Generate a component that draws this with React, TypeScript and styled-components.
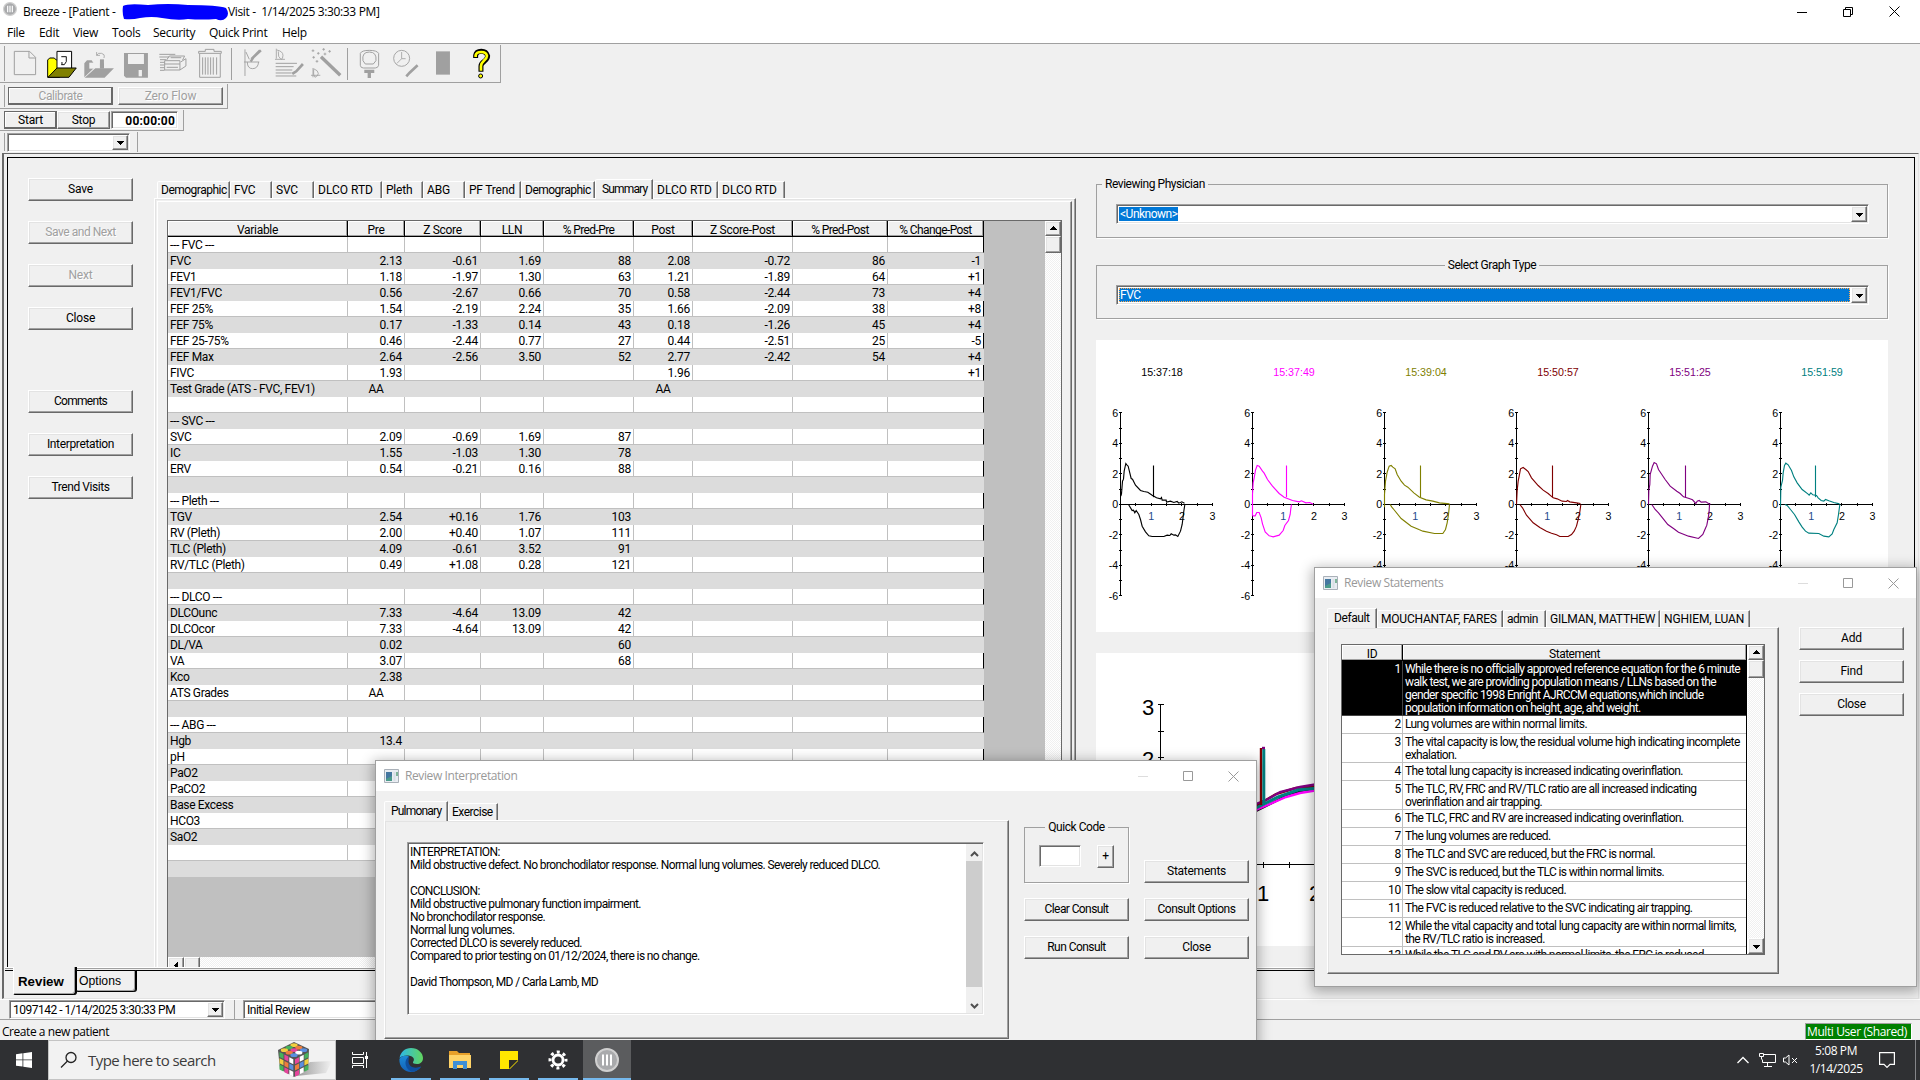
import React from 'react';
import styled, { createGlobalStyle, css } from 'styled-components';

const face = '#f0f0f0';
const sys = `'Roboto', 'Liberation Sans', sans-serif`;
const segoe = `'Open Sans', 'Noto Sans', sans-serif`;

const GlobalStyle = createGlobalStyle`
  * { box-sizing: border-box; }
  html, body { margin: 0; padding: 0; }
  body { width: 1920px; height: 1080px; overflow: hidden; background: ${face}; }
`;

const raised = css`
  border: 1px solid;
  border-color: #fff #696969 #696969 #fff;
  box-shadow: inset -1px -1px 0 #a0a0a0, inset 1px 1px 0 #e3e3e3;
`;
const sunken = css`
  border: 1px solid;
  border-color: #a0a0a0 #fff #fff #a0a0a0;
  box-shadow: inset 1px 1px 0 #696969, inset -1px -1px 0 #e3e3e3;
`;

const Screen = styled.div`
  position: relative;
  width: 1920px;
  height: 1080px;
  display: flex;
  flex-direction: column;
  overflow: hidden;
  background: ${face};
  color: #000;
  font: 12px/13px ${sys};
  letter-spacing: -0.2px;
  white-space: pre;
`;

/* ---------- title and menu ---------- */
const TitleBar = styled.header`
  height: 23px;
  flex: none;
  display: flex;
  align-items: center;
  background: #fff;
  padding: 0 20px 0 3px;
  font: 12px/20px ${segoe};
  letter-spacing: -0.35px;
`;
const TitleText = styled.span<{ $w: number }>`
  width: ${p => p.$w}px;
`;
const WindowControls = styled.div<{ $gap: number }>`
  margin-left: auto;
  display: flex;
  align-items: center;
  gap: ${p => p.$gap}px;
`;
const MenuBar = styled.nav`
  height: 20px;
  flex: none;
  display: flex;
  align-items: center;
  background: #fff;
  padding-left: 7px;
  font: 12px/18px ${segoe};
  letter-spacing: -0.3px;
`;
const MenuItem = styled.span<{ $w: number }>`
  width: ${p => p.$w}px;
`;

/* ---------- toolbars ---------- */
const Toolbars = styled.div`
  flex: none;
  height: 110px;
  border-top: 1px solid #a0a0a0;
  padding-top: 1px;
  display: flex;
  flex-direction: column;
  align-items: flex-start;
`;
const Band = styled.div<{ $w: number; $h: number; $pad: number; $last?: boolean }>`
  width: ${p => p.$w}px;
  height: ${p => p.$h}px;
  padding-left: ${p => p.$pad}px;
  border-right: 1px solid #a0a0a0;
  border-bottom: ${p => (p.$last ? 'none' : '1px solid #a0a0a0')};
  margin-bottom: 1px;
  display: flex;
  align-items: center;
  background: linear-gradient(#a0a0a0, #a0a0a0) 4px 1px / 1px calc(100% - 2px) no-repeat;
`;
const BandSep = styled.span<{ $w: number }>`
  width: ${p => p.$w}px;
  height: 32px;
  background: linear-gradient(#a0a0a0, #a0a0a0) 2px 0 / 1px 100% no-repeat;
`;
const Button = styled.button<{ $w?: number; $h?: number; $ls?: number; $default?: boolean }>`
  ${raised}
  width: ${p => p.$w ?? 105}px;
  height: ${p => p.$h ?? 23}px;
  flex: none;
  padding: ${p => (p.$h === 18 ? '1px 0 0' : '0 0 1px')};
  background: ${face};
  color: #000;
  font: 12px/13px ${sys};
  letter-spacing: ${p => p.$ls ?? -0.2}px;
  text-align: center;
  ${p => p.$default && css`border-color: #696969; box-shadow: inset -1px -1px 0 #696969, inset 1px 1px 0 #fff;`}
  &:disabled { color: #a0a0a0; text-shadow: 1px 1px 0 #fff; }
`;
const Timer = styled.div`
  ${sunken}
  width: 67px;
  height: 18px;
  margin-left: 1px;
  background: #fff;
  padding: 3px 2px 0 0;
  text-align: right;
  font: bold 12px/13px ${sys};
  letter-spacing: 0.2px;
`;
const Combo = styled.div<{ $w: number; $h?: number }>`
  ${sunken}
  width: ${p => p.$w}px;
  height: ${p => p.$h ?? 19}px;
  background: #fff;
  padding: 1px;
  display: flex;
  align-items: stretch;
  flex: none;
`;
const ComboText = styled.span<{ $state?: 'selected' | 'focused' }>`
  flex: ${p => (p.$state === 'selected' ? 'none' : '1')};
  margin: 1px ${p => (p.$state === 'selected' ? 'auto' : '1px')} 1px 1px;
  padding: 1px 1px 0;
  line-height: 12px;
  letter-spacing: -0.5px;
  ${p => p.$state && css`background: #0078d7; color: #fff;`}
  ${p => p.$state === 'focused' && css`outline: 1px dotted #ffab50; outline-offset: -1px;`}
`;
const ArrowBox = styled.span<{ $h?: number }>`
  ${raised}
  width: 16px;
  height: ${p => (p.$h ? p.$h + 'px' : 'auto')};
  flex: none;
  background: ${face};
  display: flex;
  align-items: center;
  justify-content: center;
`;
const Arrow = ({ dir = 'down' }: { dir?: 'up' | 'down' | 'left' }) => (
  <svg width="7" height="7" viewBox="0 0 7 7" shapeRendering="crispEdges">
    <path d={{ down: 'M0 2h7L3.5 6z', up: 'M0 5h7L3.5 1z', left: 'M5 0v7L1 3.5z' }[dir]} />
  </svg>
);

/* ---------- workspace ---------- */
const Workspace = styled.main`
  flex: none;
  height: 846px;
  margin-left: 2px;
  width: 1917px;
  border-left: 2px solid #696969;
  border-top: 1px solid #696969;
  border-right: 1px solid #e3e3e3;
  border-bottom: 1px solid #e3e3e3;
  display: flex;
  flex-direction: column;
  padding: 3px 4px 0 3px;
`;
const Form = styled.div`
  height: 810px;
  width: 1908px;
  flex: none;
  border-left: 1px solid #000;
  border-top: 1px solid #000;
  border-right: 1px solid #000;
  display: flex;
  overflow: hidden;
`;
const Sidebar = styled.aside`
  width: 146px;
  flex: none;
  padding: 20px 0 0 20px;
  display: flex;
  flex-direction: column;
  gap: 20px;
`;
const SidebarGap = styled.div`
  height: 20px;
`;
const TabArea = styled.section`
  width: 922px;
  flex: none;
  padding-top: 21px;
`;
const TabRow = styled.div<{ $pad?: number }>`
  height: 19px;
  display: flex;
  align-items: flex-end;
  padding-left: ${p => p.$pad ?? 0}px;
`;
const Tab = styled.span<{ $w: number; $active?: boolean; $ls?: number }>`
  width: ${p => p.$w}px;
  height: ${p => (p.$active ? 20 : 17)}px;
  flex: none;
  padding: ${p => (p.$active ? '3px 0 0 6px' : '2px 0 0 3px')};
  margin-bottom: ${p => (p.$active ? -1 : 0)}px;
  background: ${face};
  border: solid;
  border-width: 1px 1px 0 1px;
  border-color: #fff #696969 transparent #fff;
  box-shadow: inset -1px 0 0 #a0a0a0;
  border-top-left-radius: 2px;
  letter-spacing: ${p => p.$ls ?? -0.2}px;
  z-index: ${p => (p.$active ? 1 : 0)};
`;
const OuterPane = styled.div`
  height: 790px;
  border: 1px solid;
  border-color: #fff #696969 #696969 #fff;
  box-shadow: inset -1px 0 0 #a0a0a0, inset 1px 1px 0 #e3e3e3;
  padding: 2px 3px 0 2px;
`;
const InnerPane = styled.div`
  height: 790px;
  border: 1px solid;
  border-color: #fff #696969 #696969 #fff;
  box-shadow: inset -1px 0 0 #a0a0a0;
  padding: 18px 0 0 9px;
`;
const GridBox = styled.div`
  width: 895px;
  height: 760px;
  border: 1px solid #696969;
  display: flex;
  background: #c0c0c0;
`;
const GridMain = styled.div`
  flex: 1;
  display: flex;
  flex-direction: column;
`;
const cols = '180px 57px 76px 63px 90px 59px 100px 95px 96px';
const HeadRow = styled.div<{ $cols: string }>`
  display: grid;
  grid-template-columns: ${p => p.$cols};
  height: 16px;
  width: max-content;
  border-bottom: 1px solid #000;
  flex: none;
`;
const HeadCell = styled.span<{ $ls?: number }>`
  background: ${face};
  border-right: 1px solid #000;
  box-shadow: inset -1px -1px 0 #a0a0a0, inset 1px 1px 0 #fff;
  text-align: center;
  padding-top: 3px;
  overflow: hidden;
  letter-spacing: ${p => p.$ls ?? -0.3}px;
`;
const DataRow = styled.div<{ $alt: boolean }>`
  display: grid;
  grid-template-columns: ${cols};
  width: max-content;
  height: 16px;
  flex: none;
  background: ${p => (p.$alt ? '#dcdcdc' : '#fff')};
  --line: ${p => (p.$alt ? '#dcdcdc' : '#c0c0c0')};
  --end: ${p => (p.$alt ? '#dcdcdc' : '#000')};
`;
const Cell = styled.span<{ $align: string }>`
  border-right: 1px solid var(--line);
  border-bottom: 1px solid var(--line);
  text-align: ${p => p.$align};
  padding: 2px 2px 0;
  letter-spacing: ${p => (p.$align === 'left' ? -0.35 : -0.25)}px;
  &:last-child { border-right-color: var(--end); }
`;
const hatch = css`
  background: repeating-conic-gradient(#fff 0 25%, ${face} 0 50%) 0 0 / 2px 2px;
`;
const VScroll = styled.div`
  ${hatch}
  width: 16px;
  flex: none;
  display: flex;
  flex-direction: column;
`;
const ScrollThumb = styled.span<{ $w?: number; $h: number }>`
  ${raised}
  background: ${face};
  width: ${p => p.$w ?? 16}px;
  height: ${p => p.$h}px;
`;
const Push = styled.span`
  margin-top: auto;
`;
const HScroll = styled.div`
  ${hatch}
  margin-top: auto;
  height: 22px;
  display: flex;
`;

/* ---------- right side ---------- */
const RightSide = styled.section`
  width: 837px;
  padding: 19px 0 0 20px;
  display: flex;
  flex-direction: column;
`;
const Group = styled.fieldset<{ $w: number; $h: number; $mb?: number; $pt?: number; $legend: string }>`
  width: ${p => p.$w}px;
  height: ${p => p.$h}px;
  margin: 0 0 ${p => p.$mb ?? 0}px;
  min-width: 0;
  border: 1px solid #a0a0a0;
  box-shadow: 1px 1px 0 #fff;
  padding: ${p => p.$pt ?? 12}px 19px 0;
  & > legend {
    padding: 1px 3px 0;
    margin: 0 ${p => (p.$legend === 'center' ? 'auto' : '0 0 -14px')};
    height: 15px;
    letter-spacing: -0.45px;
  }
`;
const Legend = styled.legend``;
const ChartPanel = styled.div<{ $h: number; $mb?: number }>`
  width: 792px;
  height: ${p => p.$h}px;
  margin-bottom: ${p => p.$mb ?? 0}px;
  background: #fff;
  display: flex;
  flex: none;
`;

/* ---------- bottom of the workspace ---------- */
const SheetTabs = styled.div`
  height: 32px;
  margin-left: -2px;
  width: 1911px;
  flex: none;
  display: flex;
  align-items: flex-start;
  padding-left: 8px;
  background: linear-gradient(#fff, #fff) 0 0 / 100% 1px no-repeat, linear-gradient(#a0a0a0, #a0a0a0) 0 1px / 100% 1px no-repeat, linear-gradient(#000, #000) 0 3px / 100% 1px no-repeat;
`;
const SheetTab = styled.span<{ $active?: boolean; $w: number }>`
  width: ${p => p.$w}px;
  height: ${p => (p.$active ? 28 : 22)}px;
  margin-top: ${p => (p.$active ? 0 : 3)}px;
  background: ${face};
  border-right: 1px solid #000;
  border-bottom: 1px solid #000;
  border-left: 1px solid ${p => (p.$active ? '#fff' : '#000')};
  border-top: ${p => (p.$active ? 'none' : '1px solid #000')};
  box-shadow: inset -1px -1px 0 #a0a0a0, 1px 0 0 #000;
  border-radius: 0 0 3px 2px;
  padding: ${p => (p.$active ? '7px 0 0 4px' : '3px 0 0 2px')};
  font: ${p => (p.$active ? 'bold 13.3px' : '12.2px')}/15px 'Liberation Sans', Arial, sans-serif;
  letter-spacing: 0;
`;
const ComboStrip = styled.div`
  height: 21px;
  flex: none;
  border-top: 1px solid #fff;
  border-bottom: 1px solid #a0a0a0;
  display: flex;
  align-items: center;
  padding-left: 9px;
`;
const StripSep = styled.span`
  width: 1px;
  height: 19px;
  margin: 0 8px 0 9px;
  background: #a0a0a0;
`;
const StatusBar = styled.footer`
  height: 20px;
  flex: none;
  display: flex;
  align-items: flex-end;
  justify-content: space-between;
  padding: 0 8px 0 2px;
  font: 12px/16px ${segoe};
  letter-spacing: -0.45px;
`;
const UserBadge = styled.span`
  width: 107px;
  height: 17px;
  border: 1px solid #a0a0a0;
  border-right-color: #fff;
  border-bottom-color: #fff;
  background: #008000;
  color: #fff;
  padding-left: 1px;
  letter-spacing: -0.4px;
  line-height: 16px;
`;

/* ---------- taskbar ---------- */
const Taskbar = styled.div`
  position: relative;
  z-index: 5;
  height: 40px;
  flex: none;
  background: #2f3033;
  display: flex;
  align-items: stretch;
  color: #fff;
  letter-spacing: 0;
`;
const TaskCell = styled.span<{ $w: number; $ml?: number; $running?: boolean; $active?: boolean }>`
  width: ${p => p.$w}px;
  margin-left: ${p => p.$ml ?? 0}px;
  display: flex;
  align-items: center;
  justify-content: center;
  background: ${p => (p.$active ? '#5b5c5e' : 'transparent')};
  box-shadow: ${p => (p.$running ? 'inset 0 -2px 0 #76b9ed' : 'none')};
`;
const SearchBox = styled.span`
  width: 288px;
  background: #f2f2f2;
  border: 1px solid #c4c4c4;
  display: flex;
  align-items: center;
  padding: 0 1px 0 11px;
  color: #3c3c3c;
  font: 15px/20px ${segoe};
  letter-spacing: -0.55px;
`;
const SearchText = styled.span`
  margin: 0 auto 0 10px;
`;
const Tray = styled.span`
  margin-left: auto;
  display: flex;
  align-items: center;
`;
const Clock = styled.span`
  width: 74px;
  text-align: center;
  font: 12px/18px ${segoe};
  letter-spacing: -0.4px;
  margin-right: 6px;
`;
const PeekEdge = styled.span`
  width: 5px;
  height: 40px;
  margin-left: 20px;
  border-left: 1px solid #85868a;
`;

/* ---------- floating windows ---------- */
const Dialog = styled.div<{ $x: number; $y: number; $w: number; $h: number }>`
  position: absolute;
  left: ${p => p.$x}px;
  top: ${p => p.$y}px;
  width: ${p => p.$w}px;
  height: ${p => p.$h}px;
  border: 1px solid #a0a0a0;
  background: ${face};
  box-shadow: 0 3px 12px 2px rgba(0, 0, 0, 0.3);
  display: flex;
  flex-direction: column;
`;
const DialogTitle = styled.div`
  height: 30px;
  flex: none;
  background: #fff;
  display: flex;
  align-items: center;
  padding: 0 17px 0 8px;
  color: #999;
  font: 12px/16px ${segoe};
  letter-spacing: -0.4px;
`;
const DialogName = styled.span`
  margin-left: 6px;
`;
const DialogBody = styled.div<{ $pad: string }>`
  flex: 1;
  display: flex;
  padding: ${p => p.$pad};
`;
const DialogPane = styled.div<{ $w: number; $h: number; $pad: string }>`
  ${raised}
  width: ${p => p.$w}px;
  height: ${p => p.$h}px;
  padding: ${p => p.$pad};
`;
const Column = styled.div<{ $gap: number; $ml: number; $mt: number }>`
  display: flex;
  flex-direction: column;
  gap: ${p => p.$gap}px;
  margin: ${p => p.$mt}px 0 0 ${p => p.$ml}px;
`;
const TextBox = styled.div`
  ${sunken}
  width: 577px;
  height: 173px;
  background: #fff;
  padding: 1px;
  display: flex;
`;
const TextContent = styled.div`
  flex: 1;
  padding: 2px 0 0 1px;
  letter-spacing: -0.61px;
`;
const FlatScroll = styled.div`
  width: 16px;
  background: ${face};
  display: flex;
  flex-direction: column;
  align-items: center;
  padding-top: 7px;
`;
const FlatThumb = styled.span`
  width: 16px;
  height: 126px;
  margin: 4px 0 16px;
  background: #cdcdcd;
`;
const QuickRow = styled.div`
  display: flex;
  justify-content: space-between;
  margin: 0 -5px 0 -5px;
`;
const CodeInput = styled.span`
  ${sunken}
  width: 42px;
  height: 22px;
  background: #fff;
`;
const StatementBox = styled.div`
  width: 424px;
  height: 311px;
  border: 1px solid #696969;
  display: flex;
  background: #fff;
`;
const StatementList = styled.div`
  width: 405px;
  margin-right: 1px;
  display: flex;
  flex-direction: column;
  overflow: hidden;
  border-right: 1px solid #000;
`;
const StatementRow = styled.div<{ $h: number; $sel?: boolean }>`
  display: grid;
  grid-template-columns: 61px 344px;
  height: ${p => p.$h}px;
  flex: none;
  background: ${p => (p.$sel ? '#000' : '#fff')};
  color: ${p => (p.$sel ? '#fff' : '#000')};
  border-bottom: 1px solid ${p => (p.$sel ? '#444' : '#c0c0c0')};
`;
const StatementId = styled.span`
  text-align: right;
  padding: 2px 1px 0 0;
  border-right: 1px solid #c0c0c0;
  ${StatementRow}:nth-child(2) & { border-right-color: #444; }
`;
const StatementText = styled.span`
  padding: 2px 0 0 2px;
  letter-spacing: -0.61px;
`;

/* ---------- data ---------- */
const rows: string[][] = [
  ['--- FVC ---'],
  ['FVC', '2.13', '-0.61', '1.69', '88', '2.08', '-0.72', '86', '-1'],
  ['FEV1', '1.18', '-1.97', '1.30', '63', '1.21', '-1.89', '64', '+1'],
  ['FEV1/FVC', '0.56', '-2.67', '0.66', '70', '0.58', '-2.44', '73', '+4'],
  ['FEF 25%', '1.54', '-2.19', '2.24', '35', '1.66', '-2.09', '38', '+8'],
  ['FEF 75%', '0.17', '-1.33', '0.14', '43', '0.18', '-1.26', '45', '+4'],
  ['FEF 25-75%', '0.46', '-2.44', '0.77', '27', '0.44', '-2.51', '25', '-5'],
  ['FEF Max', '2.64', '-2.56', '3.50', '52', '2.77', '-2.42', '54', '+4'],
  ['FIVC', '1.93', '', '', '', '1.96', '', '', '+1'],
  ['Test Grade (ATS - FVC, FEV1)', 'AA', '', '', '', 'AA'],
  [],
  ['--- SVC ---'],
  ['SVC', '2.09', '-0.69', '1.69', '87'],
  ['IC', '1.55', '-1.03', '1.30', '78'],
  ['ERV', '0.54', '-0.21', '0.16', '88'],
  [],
  ['--- Pleth ---'],
  ['TGV', '2.54', '+0.16', '1.76', '103'],
  ['RV (Pleth)', '2.00', '+0.40', '1.07', '111'],
  ['TLC (Pleth)', '4.09', '-0.61', '3.52', '91'],
  ['RV/TLC (Pleth)', '0.49', '+1.08', '0.28', '121'],
  [],
  ['--- DLCO ---'],
  ['DLCOunc', '7.33', '-4.64', '13.09', '42'],
  ['DLCOcor', '7.33', '-4.64', '13.09', '42'],
  ['DL/VA', '0.02', '', '', '60'],
  ['VA', '3.07', '', '', '68'],
  ['Kco', '2.38'],
  ['ATS Grades', 'AA'],
  [],
  ['--- ABG ---'],
  ['Hgb', '13.4'],
  ['pH'],
  ['PaO2'],
  ['PaCO2'],
  ['Base Excess'],
  ['HCO3'],
  ['SaO2'],
  [],
  [],
];
const heads = ['Variable', 'Pre', 'Z Score', 'LLN', '% Pred-Pre', 'Post', 'Z Score-Post', '% Pred-Post', '% Change-Post'];

const statements: [string, number][] = [
  ['While there is no officially approved reference equation for the 6 minute\nwalk test, we are providing population means / LLNs based on the\ngender specific 1998 Enright AJRCCM equations,which include\npopulation information on height, age, ahd weight.', 55],
  ['Lung volumes are within normal limits.', 18],
  ['The vital capacity is low, the residual volume high indicating incomplete\nexhalation.', 29],
  ['The total lung capacity is increased indicating overinflation.', 18],
  ['The TLC, RV, FRC and RV/TLC ratio are all increased indicating\noverinflation and air trapping.', 29],
  ['The TLC, FRC and RV are increased indicating overinflation.', 18],
  ['The lung volumes are reduced.', 18],
  ['The TLC and SVC are reduced, but the FRC is normal.', 18],
  ['The SVC is reduced, but the TLC is within normal limits.', 18],
  ['The slow vital capacity is reduced.', 18],
  ['The FVC is reduced relative to the SVC indicating air trapping.', 18],
  ['While the vital capacity and total lung capacity are within normal limits,\nthe RV/TLC ratio is increased.', 29],
  ['While the TLC and RV are with normal limits, the FRC is reduced.', 18],
];

type Loop = { time: string; color: string; mark: number; upper: string; lower: string };
const loops: Loop[] = [
  { time: '15:37:18', color: '#000', mark: 99, upper: '1,-25 3,-32 6,-70 9,-76 11,-100 16,-123 19,-119 23,-115 32,-78 36,-76 45,-58 60,-42 70,-39 82,-37 95,-28 108,-20 120,-17 123,-21 125,-13 137,-13 138,-7 150,-10 160,-6 170,-9 175,-4 184,-8 192,-4', lower: '24,0 35,18 39,17 43,25 47,18 55,30 60,45 65,65 75,82 85,94 95,96 130,96 140,92 148,93 152,88 160,92 165,91 172,96 180,80 185,60 190,20 193,0' },
  { time: '15:37:49', color: '#f0f', mark: 102, upper: '0,34 0,-30 2,-65 5,-80 9,-103 14,-117 20,-115 30,-100 35,-94 45,-75 60,-55 80,-33 95,-22 120,-12 140,-8 147,-11 160,-5 172,-6 182,-1', lower: '0,34 8,34 13,24 20,24 26,40 30,58 38,82 50,94 62,97 80,92 92,78 97,63 108,48 113,30 115,12 117,0' },
  { time: '15:39:04', color: '#808000', mark: 108, upper: '0,8 0,-30 3,-70 8,-97 14,-115 20,-117 25,-112 32,-107 38,-90 50,-70 60,-58 70,-52 88,-35 105,-22 125,-14 145,-10 165,-5 195,-2', lower: '17,0 22,8 28,15 50,42 80,65 105,76 115,80 150,87 175,87 183,75 188,55 192,30 195,0' },
  { time: '15:50:57', color: '#800000', mark: 108, upper: '0,0 2,-42 5,-70 8,-85 12,-107 20,-111 28,-105 35,-99 45,-80 65,-57 80,-43 95,-33 110,-20 122,-17 137,-10 150,-9 153,-12 160,-8 180,-5 192,-3', lower: '10,0 18,10 30,32 50,55 70,69 90,80 105,86 120,91 130,96 155,96 165,90 173,80 180,65 185,45 190,22 193,0' },
  { time: '15:51:25', color: '#800080', mark: 111, upper: '0,0 1,-42 4,-60 5,-90 12,-115 17,-126 24,-122 30,-105 40,-90 50,-75 65,-55 85,-40 95,-33 105,-23 122,-18 132,-14 142,-3 146,-10 152,-12 158,-7 172,-8 180,-3 186,-1', lower: '10,0 20,15 30,25 42,40 58,60 75,72 90,83 120,95 150,102 163,90 168,78 175,62 180,35 182,20 183,0' },
  { time: '15:51:59', color: '#008080', mark: 105, upper: '0,7 1,-52 6,-72 8,-95 12,-117 16,-124 23,-119 33,-102 40,-83 50,-65 65,-45 82,-32 86,-28 91,-35 97,-29 108,-27 113,-20 122,-12 130,-10 135,-15 145,-11 160,-6 177,-2', lower: '13,0 20,3 30,15 42,30 55,52 65,68 75,80 85,86 115,87 130,95 145,97 155,88 160,75 170,55 174,30 176,15 178,0' },
];

/* ---------- charts ---------- */
const font = { fontFamily: "'Liberation Sans', Arial, sans-serif" };
const LoopChart = ({ loop }: { loop: Loop }) => (
  <svg width="132" height="292" viewBox="0 0 132 292" {...font} fontSize="10.7" letterSpacing="0">
    <text x="66" y="35.5" textAnchor="middle" fill={loop.color} fontSize="10.7">{loop.time}</text>
    <g stroke="#000" shapeRendering="crispEdges">
      <path d="M24.5 73v183M24 164.5h93" />
      {[-6, -5, -4, -3, -2, -1, 0, 1, 2, 3, 4, 5, 6].map(v => (
        <path key={v} d={`M23 ${164.5 - Math.round(v * 15.25)}h3`} />
      ))}
      {[0.5, 1, 1.5, 2, 2.5, 3].map(v => (
        <path key={v} d={`M${24.5 + Math.round(v * 30.7)} 163v3`} />
      ))}
    </g>
    {[6, 4, 2, 0, -2, -4, -6].map(v => (
      <text key={v} x="22.3" y={168.4 - v * 15.25} textAnchor="end">{v}</text>
    ))}
    {[1, 2, 3].map(v => (
      <text key={v} x={24.5 + v * 30.7} y="179.5" textAnchor="middle" fill={v === 1 ? '#234a8c' : '#000'}>{v}</text>
    ))}
    <g transform="translate(24.5 164.5) scale(.3333)" stroke={loop.color} strokeWidth="3.4" fill="none">
      <polyline points={loop.upper} />
      <polyline points={loop.lower} />
      <path d={`M${loop.mark} -117V-22`} />
    </g>
  </svg>
);
const VolumeChart = () => (
  <svg width="792" height="293" viewBox="1096 653 792 293" {...font} fontSize="22" letterSpacing="0">
    <g stroke="#000" shapeRendering="crispEdges">
      <path d="M1160.500 704V917M1160 864.500H1840" />
      {[704.5, 731.5, 757.5, 784.5, 811.5, 837.5, 890.5].map(y => <path key={y} d={`M1158 ${y}h6`} />)}
      {[1185.5, 1211.5, 1237.5, 1263.5, 1289.5, 1315.5, 1341.5].map(x => <path key={x} d={`M${x} 862v6`} />)}
    </g>
    <text x="1142" y="714.500">3</text>
    <text x="1142" y="767">2</text>
    <text x="1257" y="901">1</text>
    <text x="1309" y="901">2</text>
    <g fill="none" strokeWidth="2.4">
      <path d="M1256 811l14-7 18-9 30-8" stroke="#000" />
      <path d="M1256 810l14-6 16-7 14-4 18-3" stroke="#f0f" />
      <path d="M1256 806l20-12 20-6 22-2" stroke="#800000" />
      <path d="M1256 804l12-5 12-7 20-5 18-3" stroke="#800080" />
      <path d="M1256 808l10-5 12-6 20-7 20-2" stroke="#008080" strokeWidth="3" />
      <path d="M1261 748v57" stroke="#800000" />
      <path d="M1263.800 749v54" stroke="#008080" strokeWidth="3" />
      <path d="M1262 748h3" stroke="#800080" />
    </g>
  </svg>
);

/* ---------- toolbar icons ---------- */
const g = '#a0a0a0';
const ToolIcon = ({ left, children }: { left: number; children: React.ReactNode }) => (
  <svg width="37" height="36" viewBox={`${left * 3} 138 111 108`} fill="none" stroke={g} strokeWidth="3">{children}</svg>
);
const mainIcons: React.ReactNode[] = [
  <path d="M43 154h46l18 18v52H43zM87 154v20h20" />,
  <>
    <path d="M143 232V180l6-6h14l6 6h10v52z" fill="#ff0" stroke="#000" />
    <path d="M171 154h44v58h-44z" fill="#fff" stroke="#000" />
    <path d="M184 194h9l6-9v-14M184 170h16M186 186v8" stroke="#000" strokeWidth="2.800" />
    <path d="M144 232l27-28h58l-22 28z" fill="#808000" stroke="#000" />
  </>,
  <>
    <path d="M253 190l8-9h14l6 9h31v14h-30l-29 28z" fill={g} stroke="none" />
    <path d="M268 188h32v18h-32z" fill={face} stroke="none" />
    <path d="M300 178h12v28h-12z" fill={g} stroke="none" />
    <path d="M254 233l32-28h56l-28 28z" fill={g} stroke="none" />
    <path d="M290 156v10h10M290 166l6-6q10-2 16 4 2 4 0 10" strokeWidth="2.500" />
  </>,
  <>
    <path d="M372 159h72v74h-66l-6-6z" fill={g} stroke="none" />
    <path d="M384 162h48v30h-48z" fill={face} stroke="none" />
    <path d="M416 210h10v19h-10z" fill={face} stroke="none" />
  </>,
  <>
    <path d="M478 163h48M478 171h30M480 179h18M480 187h14M480 195h12M480 203h14M480 211h14" />
    <path d="M500 180l8-12h46l-6 12M494 182h46v10h-46zM494 192v18h46l18-12v-22l-16 10M540 192v18M500 202h34M512 173h32" />
  </>,
  <>
    <path d="M596 160v-6h20v-6h26v6h22v6zM599 162v70h62v-70" />
    <path d="M608 172v52M616 172v52M624 172v52M632 172v52M640 172v52M650 172v52" />
  </>,
];
const testIcons: React.ReactNode[] = [
  <>
    <path d="M735 148v80M732 186h46M738 156l10 22M776 186q-2 20-18 20t-16-20" strokeWidth="2.800" />
    <path d="M783 151l-22 20-9 14M780 151l-26 26" strokeWidth="7" />
  </>,
  <>
    <path d="M832 146v30M828 178h30M834 150q18 4 18 16t-6 12q-10-6-8-24" strokeWidth="2.500" />
    <path d="M830 190h64M830 200h54M830 210h50M830 219h48M830 228h62" />
    <path d="M912 192l-20 22-12 8" strokeWidth="8" />
  </>,
  <>
    <path d="M966 170l58 56" strokeWidth="10" />
    <path d="M938 152h8M942 148v8M954 160h8M958 156v8M970 148h8M974 144v8M988 154h8M992 150v8M940 172h8M944 168v8M950 184h8M954 180v8M974 162h8M978 158v8" strokeWidth="2.500" />
    <path d="M942 204v28M936 226h28M944 206q14 6 14 14t-10 12q-6-6-4-24" strokeWidth="2.500" />
  </>,
];
const viewIcons: React.ReactNode[] = [
  <>
    <path d="M1084 160q4-9 27-9t28 9v36q-2 8-10 8h-36q-8 0-9-8z" />
    <path d="M1092 182q-4-26 19-26t20 26l-8 10h-24z" />
    <path d="M1096 214h30M1111 210v24" strokeWidth="10" />
  </>,
  <>
    <circle cx="1208" cy="175" r="24" strokeWidth="2.800" />
    <path d="M1208 156v20l-14 14M1208 176h12" strokeWidth="2.500" />
    <path d="M1256 196l-24 22-10 11" strokeWidth="8" />
  </>,
  <path d="M1311 154h42v70h-42z" fill={g} stroke="none" />,
  <>
    <path d="M1430 174v-8q2-12 17-12t19 14q0 8-10 16-10 7-10 14v17" stroke="#000" strokeWidth="15" />
    <path d="M1430 171v-5q2-10 17-10t17 12q0 7-9 14-9 8-9 16v14" stroke="#ff0" strokeWidth="8" />
    <circle cx="1445" cy="228" r="6" fill="#ff0" stroke="#000" />
  </>,
];

const Min = ({ c }: { c: string }) => <svg width="10" height="10" stroke={c}><path d="M0 5.500h10" /></svg>;
const Max = ({ c }: { c: string }) => <svg width="10" height="10" stroke={c} fill="none"><path d="M.5.5h9v9h-9z" /></svg>;
const Restore = () => <svg width="10" height="10" stroke="#000" fill="none"><path d="M.5 2.500h7v7h-7zM2.500 2V.5h7v7H8" /></svg>;
const X = ({ c }: { c: string }) => <svg width="11" height="11" stroke={c}><path d="M.5.5l10 10M10.500.5l-10 10" /></svg>;
const AppIcon = () => (
  <svg width="15" height="14" viewBox="0 0 15 14">
    <path d="M.5.500h14v13H.5z" fill="#e9edf2" stroke="#a9b0b8" />
    <path d="M2 3h6v9H2z" fill="#4a9a8a" />
    <path d="M2 3h6v4L2 10z" fill="#4477a0" />
    <path d="M9.500 3h2v9h-2z" fill="#d8dee6" />
    <path d="M12 3h2v4h-2z" fill="#7fb59a" />
  </svg>
);
const Chevron = ({ up }: { up?: boolean }) => (
  <svg width="9" height="6" fill="none" stroke="#505050" strokeWidth="2"><path d={up ? 'M1 5l3.500-3.500L8 5' : 'M1 1l3.500 3.500L8 1'} /></svg>
);
const BreezeIcon = ({ size }: { size: number }) => (
  <svg width={size} height={size} viewBox="0 0 24 24">
    <circle cx="12" cy="12" r="11" fill="#a9aaac" stroke="#d0d0d0" strokeWidth="2" />
    <path d="M8 6.500v11M12 6.500v11M16 6.500v11" stroke="#fff" strokeWidth="2" />
  </svg>
);

const cubeColors = ['#ef7d3c', '#46b35b', '#5b8fe0', '#e5459b', '#f2cf3f', '#fff'];
const Cube = () => (
  <svg width="56" height="36" viewBox="0 0 56 36">
    <defs>
      <linearGradient id="shade"><stop offset="0" stopColor="#999" /><stop offset="1" stopColor="#f2f2f2" /></linearGradient>
    </defs>
    <path d="M18 34l14-14 22-1-6 12z" fill="url(#shade)" />
    <path d="M16 0l15 7-1 20-14 8L2 27 0 8z" fill="#555" />
    {[0, 1, 2].map(i => [0, 1, 2].map(j => {
      const c = (k: number) => cubeColors[(i * 2 + j * 3 + k) % 6];
      return (
        <g key={`${i}${j}`}>
          <ellipse cx={16 + (i - j) * 4.8} cy={3.200 + (i + j) * 2.500} rx="3.600" ry="1.900" fill={c(4)} />
          <path d={`M${1.500 + i * 4.900} ${10 + j * 6.300 + i * 2.600}l4 2v5l-4-2z`} fill={c(1)} />
          <path d={`M${17 + i * 4.700} ${17.300 + j * 6.200 - i * 2.500}l4-2v5l-4 2z`} fill={c(3)} />
        </g>
      );
    }))}
  </svg>
);

type TabSpec = { t: string; w: number; ls?: number; active?: boolean };
const tabs: TabSpec[] = [
  { t: 'Demographic', w: 73, ls: -0.5 }, { t: 'FVC', w: 42 }, { t: 'SVC', w: 42 }, { t: 'DLCO RTD', w: 68, ls: 0 },
  { t: 'Pleth', w: 41 }, { t: 'ABG', w: 42 }, { t: 'PF Trend', w: 56 }, { t: 'Demographic', w: 74, ls: -0.5 },
  { t: 'Summary', w: 58, ls: -0.85, active: true }, { t: 'DLCO RTD', w: 65, ls: 0 }, { t: 'DLCO RTD', w: 67, ls: 0 },
];

const SummaryGrid = () => (
  <GridBox>
    <GridMain>
      <HeadRow $cols={cols}>
        {heads.map(h => <HeadCell key={h} $ls={h.startsWith('%') ? -0.6 : -0.3}>{h}</HeadCell>)}
      </HeadRow>
      {rows.map((r, i) => (
        <DataRow key={i} $alt={i % 2 === 1}>
          {heads.map((h, j) => (
            <Cell key={h} $align={j === 0 ? 'left' : r[j] === 'AA' ? 'center' : 'right'}>{r[j] ?? ''}</Cell>
          ))}
        </DataRow>
      ))}
      <HScroll>
        <ArrowBox $h={16}><Arrow dir="left" /></ArrowBox>
        <ScrollThumb $w={16} $h={16} />
      </HScroll>
    </GridMain>
    <VScroll>
      <ArrowBox $h={15}><Arrow dir="up" /></ArrowBox>
      <ScrollThumb $h={17} />
    </VScroll>
  </GridBox>
);

const InterpretationDialog = () => (
  <Dialog $x={375} $y={760} $w={882} $h={300}>
    <DialogTitle>
      <AppIcon /><DialogName>Review Interpretation</DialogName>
      <WindowControls $gap={35}><Min c="#ddd" /><Max c="#999" /><X c="#999" /></WindowControls>
    </DialogTitle>
    <DialogBody $pad="10px 0 0 8px">
      <div>
        <TabRow><Tab $w={64} $ls={-0.8} $active>Pulmonary</Tab><Tab $w={50} $ls={-0.5}>Exercise</Tab></TabRow>
        <DialogPane $w={625} $h={219} $pad="21px 0 0 22px">
          <TextBox>
            <TextContent>{`INTERPRETATION:
Mild obstructive defect. No bronchodilator response. Normal lung volumes. Severely reduced DLCO.

CONCLUSION:
Mild obstructive pulmonary function impairment.
No bronchodilator response.
Normal lung volumes.
Corrected DLCO is severely reduced.
Compared to prior testing on 01/12/2024, there is no change.

David Thompson, MD / Carla Lamb, MD`}</TextContent>
            <FlatScroll><Chevron up /><FlatThumb /><Chevron /></FlatScroll>
          </TextBox>
        </DialogPane>
      </div>
      <Column $gap={15} $ml={15} $mt={19}>
        <Group $w={105} $h={63} $mb={0} $pt={10} $legend="center">
          <Legend>Quick Code</Legend>
          <QuickRow><CodeInput /><Button $w={17} $h={23}>+</Button></QuickRow>
        </Group>
        <Button $ls={-0.6}>Clear Consult</Button>
        <Button $ls={-0.55}>Run Consult</Button>
      </Column>
      <Column $gap={15} $ml={15} $mt={59}>
        <Button $ls={-0.25}>Statements</Button>
        <Button $ls={-0.5}>Consult Options</Button>
        <Button $ls={-0.3}>Close</Button>
      </Column>
    </DialogBody>
  </Dialog>
);

const StatementsDialog = () => (
  <Dialog $x={1314} $y={567} $w={603} $h={420}>
    <DialogTitle>
      <AppIcon /><DialogName>Review Statements</DialogName>
      <WindowControls $gap={35}><Min c="#ddd" /><Max c="#999" /><X c="#999" /></WindowControls>
    </DialogTitle>
    <DialogBody $pad="10px 0 0 12px">
      <div>
        <TabRow>
          <Tab $w={50} $ls={-0.4} $active>Default</Tab><Tab $w={126}>MOUCHANTAF, FARES</Tab><Tab $w={43} $ls={-0.5}>admin</Tab>
          <Tab $w={114}>GILMAN, MATTHEW</Tab><Tab $w={90} $ls={-0.1}>NGHIEM, LUAN</Tab>
        </TabRow>
        <DialogPane $w={452} $h={347} $pad="16px 0 0 13px">
          <StatementBox>
            <StatementList>
              <HeadRow $cols="61px 344px"><HeadCell>ID</HeadCell><HeadCell $ls={-0.5}>Statement</HeadCell></HeadRow>
              {statements.map(([text, h], i) => (
                <StatementRow key={i} $h={h} $sel={i === 0}>
                  <StatementId>{i + 1}</StatementId>
                  <StatementText>{text}</StatementText>
                </StatementRow>
              ))}
            </StatementList>
            <VScroll>
              <ArrowBox $h={15}><Arrow dir="up" /></ArrowBox>
              <ScrollThumb $h={18} />
              <Push />
              <ArrowBox $h={16}><Arrow /></ArrowBox>
            </VScroll>
          </StatementBox>
        </DialogPane>
      </div>
      <Column $gap={10} $ml={20} $mt={19}>
        <Button>Add</Button>
        <Button>Find</Button>
        <Button $ls={-0.3}>Close</Button>
      </Column>
    </DialogBody>
  </Dialog>
);

const WindowsTaskbar = () => (
  <Taskbar>
    <TaskCell $w={48}>
      <svg width="16" height="16" fill="#fff"><path d="M0 2.200l6.500-.9v6.200H0zM7.300 1.200L16 0v7.500H7.300zM0 8.300h6.500v6.300L0 13.700zM7.300 8.300H16V16l-8.700-1.200z" /></svg>
    </TaskCell>
    <SearchBox>
      <svg width="18" height="18" fill="none" stroke="#222" strokeWidth="1.300"><circle cx="11" cy="6.500" r="5" /><path d="M7.500 10L1 16.500" /></svg>
      <SearchText>Type here to search</SearchText>
      <Cube />
    </SearchBox>
    <TaskCell $w={48}>
      <svg width="17" height="16" fill="none" stroke="#fff"><path d="M.5 0v2.500h11V0M.5 5.500h11v6H.5zM.5 16v-2.500h11V16M14.500 0v16" /><path d="M13 4h3v3h-3z" fill="#fff" stroke="none" /></svg>
    </TaskCell>
    <TaskCell $w={40} $ml={7} $running>
      <svg width="24" height="24" viewBox="0 0 24 24">
        <defs>
          <linearGradient id="edgeTop" x1="0" x2="1"><stop offset="0" stopColor="#2cb8e8" /><stop offset="1" stopColor="#62d65f" /></linearGradient>
          <linearGradient id="edgeLow" x1="0" y1="0" x2="0" y2="1"><stop offset="0" stopColor="#1c8ad6" /><stop offset="1" stopColor="#1461b8" /></linearGradient>
        </defs>
        <path d="M.6 10C1.500 4 6 0 12 0c7 0 12 5 12 10 0 4-3 6-6 6-3 0-4.500-1-4-2 1.500-1.500 1.500-5-2.500-6C7 7 2 8 .6 10z" fill="url(#edgeTop)" />
        <path d="M.4 11C2 7.500 7 7 10 8.500c-3 2-3 7 0 10 3 3 8 3 12 0C20 22 16 24 12 24 5 24 0 18.500.4 11z" fill="url(#edgeLow)" />
        <path d="M10 8.500c-5 3-5 11 2 15 4 1 8-2 10-5-6 2.500-12 1-12.500-5z" fill="#0f4f9e" />
      </svg>
    </TaskCell>
    <TaskCell $w={40} $ml={9} $running>
      <svg width="22" height="20" viewBox="0 0 22 20"><path d="M0 1h8l2 2h11v4H0z" fill="#e8a02a" /><path d="M0 5h22v13H0z" fill="#ffd368" /><path d="M4 19v-8h14v8h-4v-4H8v4z" fill="#3f8fd6" /></svg>
    </TaskCell>
    <TaskCell $w={40} $ml={9} $running>
      <svg width="18" height="18"><path d="M0 0h18v10l-8 8H0z" fill="#ffe600" /><path d="M9 9h9l-9 9z" fill="#2b2b2b" /></svg>
    </TaskCell>
    <TaskCell $w={40} $ml={9} $running>
      <svg width="20" height="20" viewBox="0 0 20 20" fill="none" stroke="#fff"><circle cx="10" cy="10" r="5" strokeWidth="2.800" /><circle cx="10" cy="10" r="8" strokeWidth="3" strokeDasharray="3 3.283" strokeDashoffset="1.500" /></svg>
    </TaskCell>
    <TaskCell $w={48} $ml={5} $running $active><BreezeIcon size={24} /></TaskCell>
    <Tray>
      <svg width="12" height="8" fill="none" stroke="#fff" strokeWidth="1.300"><path d="M.5 7L6 1.500 11.500 7" /></svg>
      <svg width="17" height="14" fill="none" stroke="#fff" style={{ marginLeft: 10 }}><path d="M5 1.500h11.500v8H3.500v-3M8.500 10v3M5 13.500h8M.5.500h4v3h-4zM2.500 3.500v3" /></svg>
      <svg width="15" height="12" fill="none" stroke="#fff" style={{ margin: '0 1px 0 7px' }}><path d="M.5 4v4h2L6 11V1L2.500 4zM9 4l5 5M14 4l-5 5" /></svg>
      <Clock>{'5:08 PM\n1/14/2025'}</Clock>
      <svg width="16" height="16" fill="none" stroke="#fff" strokeWidth="1.200"><path d="M.6.6h14.800v11.800H11L8 15.400l-3-3H.6z" /></svg>
      <PeekEdge />
    </Tray>
  </Taskbar>
);

export default function App() {
  return (
    <Screen>
      <GlobalStyle />
      <TitleBar>
        <TitleText $w={20}><BreezeIcon size={14} /></TitleText>
        <TitleText $w={99}>Breeze - [Patient -</TitleText>
        <svg width="106" height="20" viewBox="0 0 106 20"><path d="M1 4q5-3 25-1 20-2 40 0 30 0 38 3 4 6 0 10-4 4-10 1-14 1-28 0-10 2-26-1-10-2-22 0-8 2-16 1Q0 12 1 4z" fill="#00f" /></svg>
        <TitleText $w={160}>{'Visit -  1/14/2025 3:30:33 PM]'}</TitleText>
        <WindowControls $gap={36}><Min c="#000" /><Restore /><X c="#000" /></WindowControls>
      </TitleBar>
      <MenuBar>
        <MenuItem $w={32}>File</MenuItem><MenuItem $w={34}>Edit</MenuItem><MenuItem $w={39}>View</MenuItem>
        <MenuItem $w={41}>Tools</MenuItem><MenuItem $w={56}>Security</MenuItem><MenuItem $w={73}>Quick Print</MenuItem><MenuItem $w={30}>Help</MenuItem>
      </MenuBar>
      <Toolbars>
        <Band $w={501} $h={38} $pad={7}>
          {mainIcons.map((icon, i) => <ToolIcon key={i} left={7 + 37 * i}>{icon}</ToolIcon>)}
          <BandSep $w={6} />
          {testIcons.map((icon, i) => <ToolIcon key={i} left={235 + 37 * i}>{icon}</ToolIcon>)}
          <BandSep $w={7} />
          {viewIcons.map((icon, i) => <ToolIcon key={i} left={353 + 37 * i}>{icon}</ToolIcon>)}
        </Band>
        <Band $w={228} $h={25} $pad={8}>
          <Button $h={18} $ls={-0.4} $default disabled>Calibrate</Button>
          <Button $h={18} $ls={-0.1} disabled style={{ marginLeft: 5 }}>Zero Flow</Button>
        </Band>
        <Band $w={184} $h={21} $pad={4}>
          <Button $w={53} $h={18} $default>Start</Button>
          <Button $w={53} $h={18}>Stop</Button>
          <Timer>00:00:00</Timer>
        </Band>
        <Band $w={138} $h={20} $pad={7} $last>
          <Combo $w={123}><ComboText /><ArrowBox><Arrow /></ArrowBox></Combo>
        </Band>
      </Toolbars>
      <Workspace>
        <Form>
          <Sidebar>
            <Button>Save</Button>
            <Button $ls={-0.45} disabled>Save and Next</Button>
            <Button disabled>Next</Button>
            <Button>Close</Button>
            <SidebarGap />
            <Button $ls={-0.7}>Comments</Button>
            <Button $ls={-0.35}>Interpretation</Button>
            <Button $ls={-0.45}>Trend Visits</Button>
          </Sidebar>
          <TabArea>
            <TabRow $pad={3}>
              {tabs.map((tab, i) => <Tab key={i} $w={tab.w} $ls={tab.ls} $active={tab.active}>{tab.t}</Tab>)}
            </TabRow>
            <OuterPane><InnerPane><SummaryGrid /></InnerPane></OuterPane>
          </TabArea>
          <RightSide>
            <Group $w={792} $h={61} $mb={20} $legend="left">
              <Legend>Reviewing Physician</Legend>
              <Combo $w={753} $h={20}><ComboText $state="selected">{'<Unknown>'}</ComboText><ArrowBox><Arrow /></ArrowBox></Combo>
            </Group>
            <Group $w={792} $h={61} $mb={21} $legend="center">
              <Legend>Select Graph Type</Legend>
              <Combo $w={753} $h={20}><ComboText $state="focused">FVC</ComboText><ArrowBox><Arrow /></ArrowBox></Combo>
            </Group>
            <ChartPanel $h={292} $mb={21}>{loops.map(l => <LoopChart key={l.time} loop={l} />)}</ChartPanel>
            <ChartPanel $h={293}><VolumeChart /></ChartPanel>
          </RightSide>
        </Form>
        <SheetTabs>
          <SheetTab $active $w={63}>Review</SheetTab>
          <SheetTab $w={60}>Options</SheetTab>
        </SheetTabs>
      </Workspace>
      <ComboStrip>
        <Combo $w={216}><ComboText>1097142 - 1/14/2025 3:30:33 PM</ComboText><ArrowBox><Arrow /></ArrowBox></Combo>
        <StripSep />
        <Combo $w={216}><ComboText>Initial Review</ComboText><ArrowBox><Arrow /></ArrowBox></Combo>
      </ComboStrip>
      <StatusBar><span>Create a new patient</span><UserBadge>Multi User (Shared)</UserBadge></StatusBar>
      <WindowsTaskbar />
      <StatementsDialog />
      <InterpretationDialog />
    </Screen>
  );
}
